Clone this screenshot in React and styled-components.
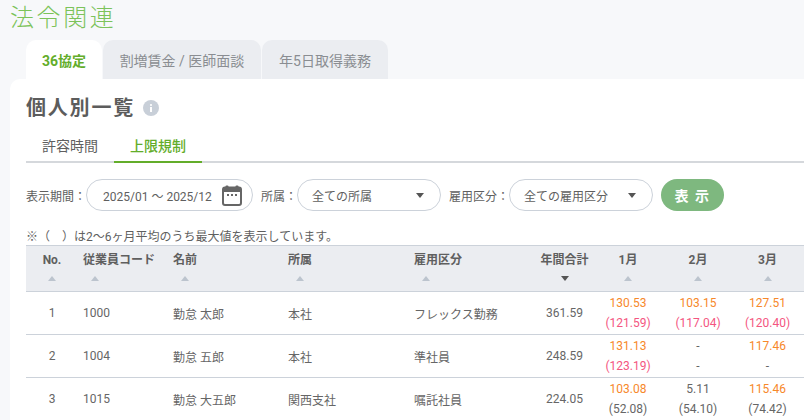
import React from 'react';
import styled, { createGlobalStyle } from 'styled-components';

const Global = createGlobalStyle`
  html, body { margin: 0; padding: 0; height: 420px; overflow: hidden; background: #f7f8fa; }
  body { font-family: Roboto, "Noto Sans CJK JP", sans-serif; color: #5f5f5f; }
  * { box-sizing: border-box; }
`;

const Page = styled.div`
  width: 804px;
  height: 420px;
  overflow: hidden;
  display: flex;
  flex-direction: column;
`;
const Heading = styled.h1`
  margin: 0;
  flex: none;
  height: 40px;
  padding: 0 0 0 10px;
  font-size: 24px;
  line-height: 36px;
  font-weight: 300;
  letter-spacing: 2.6px;
  color: #7cc35a;
`;
const Tabs = styled.div`
  display: flex;
  flex: none;
  gap: 1px;
  padding-left: 26px;
  height: 39px;
`;
const Tab = styled.div`
  width: ${p => p.$w}px;
  border-radius: 10px 10px 0 0;
  background: ${p => (p.$active ? '#fff' : '#ebedf1')};
  color: ${p => (p.$active ? '#63ad2a' : '#8a8d92')};
  font-size: 14px;
  font-weight: ${p => (p.$active ? 700 : 400)};
  display: flex;
  align-items: center;
  justify-content: center;
  white-space: nowrap;
`;
const Panel = styled.main`
  flex: none;
  height: 341px;
  margin-left: 10px;
  background: #fff;
  border-radius: 10px 0 0 0;
  padding: 17px 0 0 16px;
  min-width: 0;
`;
const TitleRow = styled.div`
  display: flex;
  align-items: center;
  gap: 8px;
  height: 24px;
`;
const Title = styled.h2`
  margin: 0;
  font-size: 20px;
  font-weight: 700;
  letter-spacing: 1.8px;
  line-height: 24px;
  color: #5c5c5c;
`;
const InfoIcon = styled.svg`
  width: 16px;
  height: 16px;
  display: block;
`;
const SubTabs = styled.div`
  display: flex;
  margin-top: 11px;
  height: 32px;
  border-bottom: 2px solid #d5d8dc;
`;
const SubTab = styled.div`
  width: 88px;
  height: 32px;
  font-size: 14px;
  line-height: 28px;
  padding-top: 1px;
  text-align: center;
  color: ${p => (p.$active ? '#63ad2a' : '#5f5f5f')};
  font-weight: ${p => (p.$active ? 500 : 400)};
  border-bottom: 2px solid ${p => (p.$active ? '#63ad2a' : 'transparent')};
`;
const Filters = styled.div`
  display: flex;
  align-items: center;
  height: 32px;
  margin-top: 16px;
`;
const Label = styled.span`
  font-size: 12px;
  color: #5f5f5f;
  white-space: nowrap;
  margin-left: ${p => p.$ml || 0}px;
`;
const Field = styled.div`
  width: ${p => p.$w}px;
  height: 32px;
  border: 1px solid #ccd2da;
  border-radius: 16px;
  display: flex;
  align-items: center;
  justify-content: space-between;
  padding: 0 ${p => p.$pr}px 0 ${p => p.$pl}px;
  font-size: 12px;
  color: #5f5f5f;
  white-space: nowrap;
  background: #fff;
`;
const CalendarIcon = styled.svg`
  width: 20px;
  height: 21px;
  display: block;
`;
const Caret = styled.i`
  display: block;
  width: 0;
  height: 0;
  border-left: 4px solid transparent;
  border-right: 4px solid transparent;
  border-top: 5px solid #555;
`;
const SortUp = styled.i`
  display: ${p => (p.$center ? 'block' : 'inline-block')};
  margin: ${p => (p.$center ? '0 auto' : '0 0 0 8px')};
  width: 0;
  height: 0;
  border-left: 4px solid transparent;
  border-right: 4px solid transparent;
  border-bottom: 5px solid #bcc4ce;
`;
const SortDown = styled(Caret)`
  margin: 0 auto;
`;
const ShowButton = styled.button`
  width: 63px;
  height: 32px;
  margin-left: 8px;
  border: 0;
  border-radius: 16px;
  background: #7eb87f;
  color: #fff;
  font: 700 14px Roboto, "Noto Sans CJK JP", sans-serif;
  letter-spacing: 1.5px;
  padding: 0;
`;
const Note = styled.p`
  margin: 18px 0 0;
  height: 16px;
  font-size: 12px;
  line-height: 16px;
  color: #5f5f5f;
  white-space: nowrap;
`;
const Table = styled.table`
  border-collapse: collapse;
  table-layout: fixed;
  width: 778px;
  font-size: 12px;
`;
const Th = styled.th`
  background: #ebedf1;
  border-top: 1px solid #ccd2da;
  border-bottom: 1px solid #ccd2da;
  height: 46px;
  padding: 0 0 0 ${p => p.$pl || 0}px;
  text-align: ${p => (p.$center ? 'center' : 'left')};
  font-weight: 700;
  font-size: 12px;
  color: #5f5f5f;
  vertical-align: top;
`;
const ThLabel = styled.div`
  height: 18px;
  margin-top: 5px;
  line-height: 18px;
  white-space: nowrap;
`;
const ThSort = styled.div`
  height: 10px;
  margin-top: 4px;
  display: flex;
  align-items: center;
`;
const Td = styled.td`
  height: 43px;
  padding: 0 0 0 ${p => p.$pl || 0}px;
  border-bottom: 1px solid #ccd2da;
  text-align: ${p => (p.$center ? 'center' : 'left')};
  color: #666;
  white-space: nowrap;
`;
const Val = styled.div`
  line-height: 20px;
  color: ${p => ({ o: '#f7882a', r: '#f4567f', n: '#666' }[p.$c])};
`;

const cols = [52, 89, 115, 126, 128, 57, 70, 70, 69, 2];
const months = ['1月', '2月', '3月'];
const rows = [
  { no: 1, code: '1000', name: '勤怠 太郎', dept: '本社', kind: 'フレックス勤務', total: '361.59',
    m: [[['130.53', 'o'], ['(121.59)', 'r']], [['103.15', 'o'], ['(117.04)', 'r']], [['127.51', 'o'], ['(120.40)', 'r']]] },
  { no: 2, code: '1004', name: '勤怠 五郎', dept: '本社', kind: '準社員', total: '248.59',
    m: [[['131.13', 'o'], ['(123.19)', 'r']], [['-', 'n'], ['-', 'n']], [['117.46', 'o'], ['-', 'n']]] },
  { no: 3, code: '1015', name: '勤怠 大五郎', dept: '関西支社', kind: '嘱託社員', total: '224.05',
    m: [[['103.08', 'o'], ['(52.08)', 'n']], [['5.11', 'n'], ['(54.10)', 'n']], [['115.46', 'o'], ['(74.42)', 'n']]] },
];

const Left = ({ pl, children }) => (
  <Th $pl={pl}>
    <ThLabel>{children}</ThLabel>
    <ThSort><SortUp /></ThSort>
  </Th>
);
const Center = ({ children, down }) => (
  <Th $center>
    <ThLabel>{children}</ThLabel>
    <ThSort>{down ? <SortDown /> : <SortUp $center />}</ThSort>
  </Th>
);

export default function App() {
  return (
    <Page>
      <Global />
      <Heading>法令関連</Heading>
      <Tabs>
        <Tab $w={76} $active>36協定</Tab>
        <Tab $w={158}>割増賃金 / 医師面談</Tab>
        <Tab $w={126}>年5日取得義務</Tab>
      </Tabs>
      <Panel>
        <TitleRow>
          <Title>個人別一覧</Title>
          <InfoIcon viewBox="0 0 16 16">
            <circle cx="8" cy="8" r="8" fill="#c8cfd8" />
            <circle cx="8" cy="5" r="1.1" fill="#fff" />
            <rect x="7" y="7" width="2" height="5" fill="#fff" />
          </InfoIcon>
        </TitleRow>
        <SubTabs>
          <SubTab>許容時間</SubTab>
          <SubTab $active>上限規制</SubTab>
        </SubTabs>
        <Filters>
          <Label>表示期間：</Label>
          <Field $w={167} $pl={16} $pr={10}>
            2025/01 ～ 2025/12
            <CalendarIcon viewBox="0 0 20 21">
              <rect x="3.5" y="0.5" width="3" height="4" rx="1" fill="#666" />
              <rect x="13.5" y="0.5" width="3" height="4" rx="1" fill="#666" />
              <rect x="1" y="2.5" width="18" height="17.5" rx="2" fill="none" stroke="#666" strokeWidth="2" />
              <rect x="1" y="2.5" width="18" height="4.5" fill="#666" />
              <rect x="5" y="9" width="2" height="2" fill="#666" />
              <rect x="9" y="9" width="2" height="2" fill="#666" />
              <rect x="13" y="9" width="2" height="2" fill="#666" />
            </CalendarIcon>
          </Field>
          <Label $ml={8}>所属：</Label>
          <Field $w={144} $pl={14} $pr={16}>全ての所属<Caret /></Field>
          <Label $ml={8}>雇用区分：</Label>
          <Field $w={144} $pl={14} $pr={16}>全ての雇用区分<Caret /></Field>
          <ShowButton>表 示</ShowButton>
        </Filters>
        <Note>※（　）は2～6ヶ月平均のうち最大値を表示しています。</Note>
        <Table>
          <colgroup>{cols.map((w, i) => <col key={i} style={{ width: w }} />)}</colgroup>
          <thead>
            <tr>
              <Center>No.</Center>
              <Left pl={5}>従業員コード</Left>
              <Left pl={6}>名前</Left>
              <Left pl={6}>所属</Left>
              <Left pl={6}>雇用区分</Left>
              <Center down>年間合計</Center>
              {months.map(m => <Center key={m}>{m}</Center>)}
              <Th />
            </tr>
          </thead>
          <tbody>
            {rows.map(r => (
              <tr key={r.no}>
                <Td $center>{r.no}</Td>
                <Td $pl={5}>{r.code}</Td>
                <Td $pl={6}>{r.name}</Td>
                <Td $pl={6}>{r.dept}</Td>
                <Td $pl={6}>{r.kind}</Td>
                <Td $center>{r.total}</Td>
                {r.m.map((v, i) => (
                  <Td $center key={i}>
                    {v.map(([t, c], j) => <Val key={j} $c={c}>{t}</Val>)}
                  </Td>
                ))}
                <Td />
              </tr>
            ))}
          </tbody>
        </Table>
      </Panel>
    </Page>
  );
}
